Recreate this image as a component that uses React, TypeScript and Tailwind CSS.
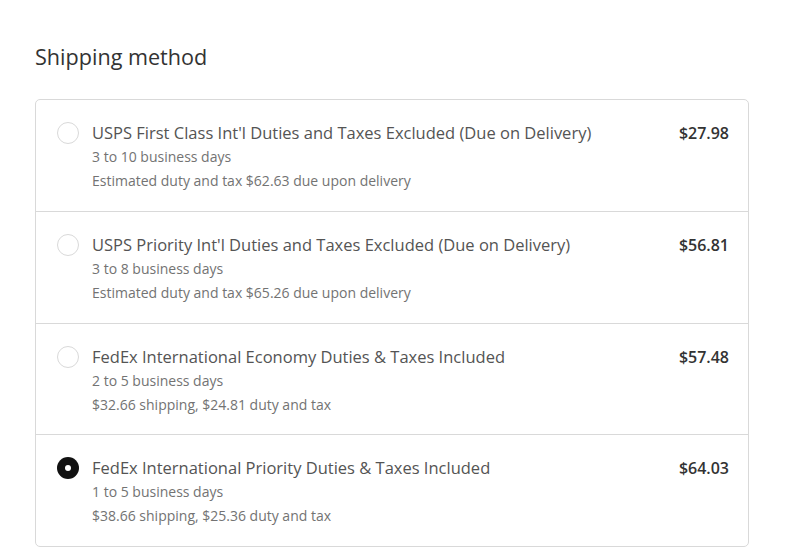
import React from "react";

const rows = [
  {
    title: "USPS First Class Int'l Duties and Taxes Excluded (Due on Delivery)",
    days: "3 to 10 business days",
    note: "Estimated duty and tax $62.63 due upon delivery",
    price: "$27.98",
    selected: false,
  },
  {
    title: "USPS Priority Int'l Duties and Taxes Excluded (Due on Delivery)",
    days: "3 to 8 business days",
    note: "Estimated duty and tax $65.26 due upon delivery",
    price: "$56.81",
    selected: false,
  },
  {
    title: "FedEx International Economy Duties & Taxes Included",
    days: "2 to 5 business days",
    note: "$32.66 shipping, $24.81 duty and tax",
    price: "$57.48",
    selected: false,
  },
  {
    title: "FedEx International Priority Duties & Taxes Included",
    days: "1 to 5 business days",
    note: "$38.66 shipping, $25.36 duty and tax",
    price: "$64.03",
    selected: true,
  },
];

export default function App() {
  return (
    <div
      className="w-[793px] h-[559px] bg-white pl-[35px] pr-[44px] pt-[42px]"
      style={{ fontFamily: '"Open Sans", sans-serif' }}
    >
      <h2 className="text-[21.6px] leading-[30px] text-[#333333] font-normal mb-[27px]">
        Shipping method
      </h2>
      <div className="border border-[#d9d9d9] rounded-[5px]">
        {rows.map((r, i) => (
          <div
            key={i}
            className={`flex items-start pl-[20px] pr-[19px] pt-[21px] pb-[17.75px] ${
              i > 0 ? "border-t border-[#d9d9d9]" : ""
            }`}
          >
            <div className="w-[24px] h-[24px] flex items-center justify-center shrink-0">
              {r.selected ? (
                <div className="w-[22px] h-[22px] rounded-full bg-[#111111] flex items-center justify-center">
                  <div className="w-[6px] h-[6px] rounded-full bg-white" />
                </div>
              ) : (
                <div className="w-[22px] h-[22px] rounded-full border border-[#d9d9d9] bg-white" />
              )}
            </div>
            <div className="flex-1 ml-[12px]">
              <div className="text-[16.5px] leading-[24px] text-[#545454]">{r.title}</div>
              <div className="text-[14px] leading-[24px] text-[#737373]">{r.days}</div>
              <div className="text-[14px] leading-[24px] text-[#737373]">{r.note}</div>
            </div>
            <div className="text-[16px] leading-[24px] font-semibold text-[#333333] ml-4">
              {r.price}
            </div>
          </div>
        ))}
      </div>
    </div>
  );
}
